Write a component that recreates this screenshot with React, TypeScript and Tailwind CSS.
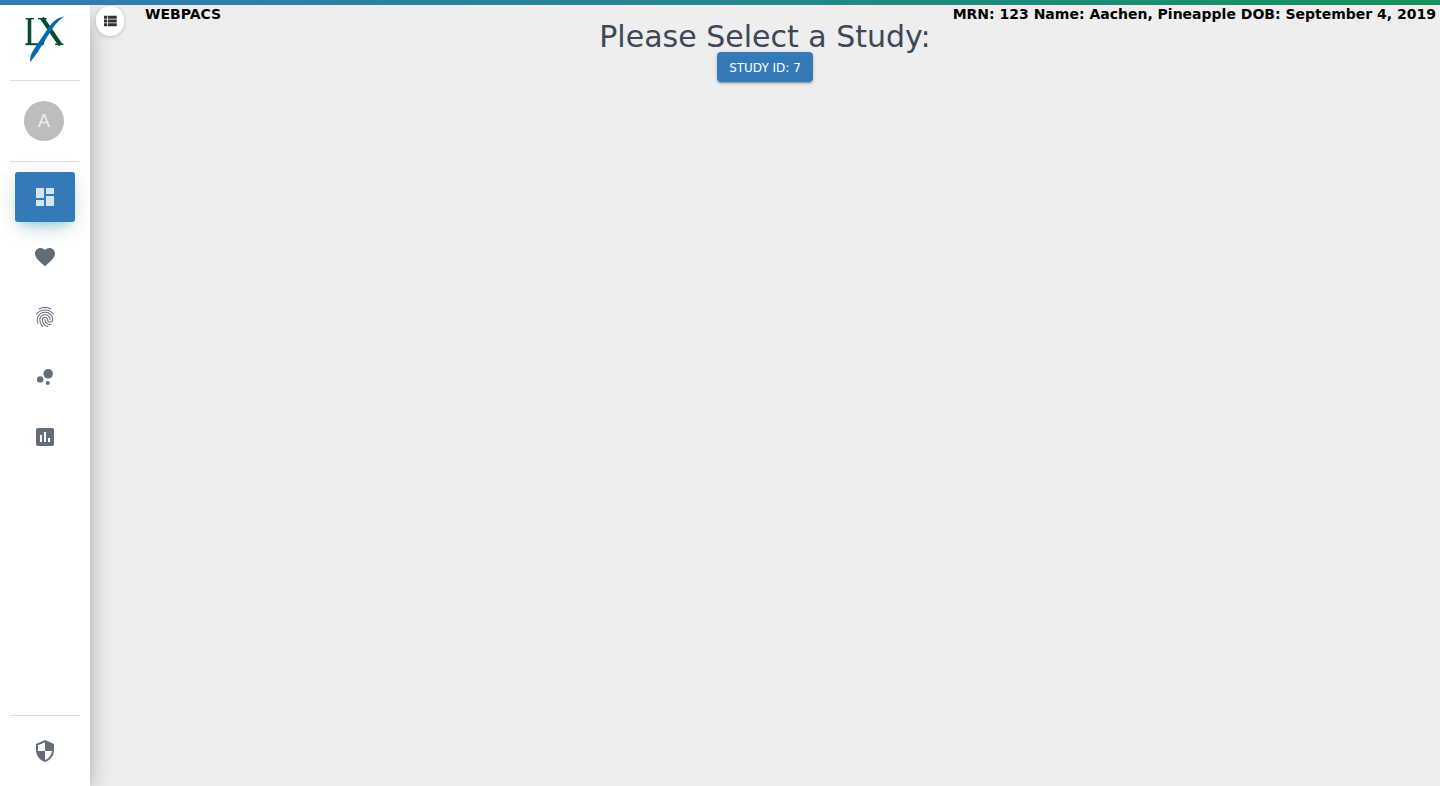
import type { ComponentType } from "react";
import {
  MdBubbleChart,
  MdDashboard,
  MdFavorite,
  MdFingerprint,
  MdInsertChart,
  MdSecurity,
} from "react-icons/md";

type NavItem = {
  label: string;
  icon: ComponentType<{ size?: number }>;
  active?: boolean;
};

const navItems: NavItem[] = [
  { label: "Dashboard", icon: MdDashboard, active: true },
  { label: "Favorites", icon: MdFavorite },
  { label: "Fingerprint", icon: MdFingerprint },
  { label: "Bubble chart", icon: MdBubbleChart },
  { label: "Reports", icon: MdInsertChart },
];

function Logo() {
  return (
    <svg width="44" height="60" viewBox="0 0 44 60" role="img" aria-label="LX">
      <g stroke="#00502f" fill="none">
        <line x1="6.5" y1="13" x2="6.5" y2="40" strokeWidth="3.6" />
        <line x1="2.5" y1="13.7" x2="11" y2="13.7" strokeWidth="1.4" />
        <line x1="2.5" y1="39.2" x2="20" y2="39.2" strokeWidth="2" />
        <line x1="19.5" y1="40" x2="21.5" y2="34" strokeWidth="1.6" />
        <line x1="19" y1="13" x2="37.5" y2="40" strokeWidth="4.2" />
        <line x1="15" y1="13.7" x2="23.5" y2="13.7" strokeWidth="1.4" />
        <line x1="32" y1="39.3" x2="40.5" y2="39.3" strokeWidth="1.4" />
      </g>
      <path
        d="M41.5 11.5C35 12 29 17 24.5 24L12.5 42C8.500 48 6.500 51 7.500 57.500C10 52.500 13 50.500 16 45L27.500 26.500C32 19.500 36 15 41.500 11.500Z"
        fill="#0069b0"
      />
    </svg>
  );
}

function ListIcon() {
  return (
    <svg width="18" height="18" viewBox="0 0 24 24" fill="currentColor" aria-hidden="true">
      <path d="M4 14h4v-4H4v4zm0 5h4v-4H4v4zM4 9h4V5H4v4zm5 5h12v-4H9v4zm0 5h12v-4H9v4zM9 5v4h12V5H9z" />
    </svg>
  );
}

function NavLink({ label, icon: Icon, active }: NavItem) {
  return (
    <a
      href="#"
      aria-label={label}
      aria-current={active ? "page" : undefined}
      className={
        active
          ? "flex h-[50px] items-center justify-center rounded-[3px] bg-[#337ab7] text-white/80 shadow-[0_12px_20px_-10px_rgba(0,172,193,0.28),0_4px_20px_0_rgba(0,0,0,0.12),0_7px_8px_-5px_rgba(0,172,193,0.2)]"
          : "flex h-[50px] items-center justify-center rounded-[3px] text-[#3c4858]/80"
      }
    >
      <Icon size={24} />
    </a>
  );
}

function Sidebar() {
  return (
    <aside className="z-10 flex w-[90px] shrink-0 flex-col bg-white shadow-[0_10px_30px_-12px_rgba(0,0,0,0.42),0_4px_25px_0_rgba(0,0,0,0.12),0_8px_10px_-5px_rgba(0,0,0,0.2)]">
      <a href="#" className="mx-[10px] flex h-[76px] items-start justify-center border-b border-[#dddddd]">
        <Logo />
      </a>
      <div className="mx-[10px] flex h-[81px] items-center justify-center border-b border-[#dddddd] pr-0.5">
        <div className="flex size-10 items-center justify-center rounded-full bg-[#bdbdbd] text-lg text-[#eeeeee]">
          A
        </div>
      </div>
      <nav className="flex flex-col gap-[10px] px-[15px] pt-[10px]">
        {navItems.map((item) => (
          <NavLink key={item.label} {...item} />
        ))}
      </nav>
      <div className="mx-[10px] mt-auto border-t border-[#dddddd] px-[5px] py-[10px]">
        <NavLink label="Security" icon={MdSecurity} />
      </div>
    </aside>
  );
}

export default function App() {
  return (
    <div className="flex min-h-screen flex-col bg-[#eeeeee] font-['Verdana','DejaVu_Sans',sans-serif]">
      <div className="z-20 h-[5px] bg-linear-to-r from-[#337ab7] to-[#1b8f5a]" />
      <div className="flex grow">
        <Sidebar />
        <div className="min-w-0 grow">
          <header className="flex h-4 items-start justify-between pr-1 pl-1.5 text-sm/[18px] font-bold text-black">
            <div className="flex items-start gap-[21px]">
              <button
                aria-label="Toggle list"
                className="z-20 mt-px flex h-[30px] w-7 items-center justify-center rounded-full bg-white text-[#333333] shadow-[0_1px_4px_rgba(0,0,0,0.2)]"
              >
                <ListIcon />
              </button>
              <span>WEBPACS</span>
            </div>
            <span>MRN: 123 Name: Aachen, Pineapple DOB: September 4, 2019</span>
          </header>
          <main className="flex flex-col items-center">
            <h1 className="text-3xl/[31px] text-[#3c4858]">Please Select a Study:</h1>
            <button className="h-[30px] rounded-sm bg-[#337ab7] px-3 pt-0.5 text-xs text-white shadow-[0_3px_1px_-2px_rgba(0,0,0,0.2),0_2px_2px_0_rgba(0,0,0,0.14),0_1px_5px_0_rgba(0,0,0,0.12)]">
              STUDY ID: 7
            </button>
          </main>
        </div>
      </div>
    </div>
  );
}
